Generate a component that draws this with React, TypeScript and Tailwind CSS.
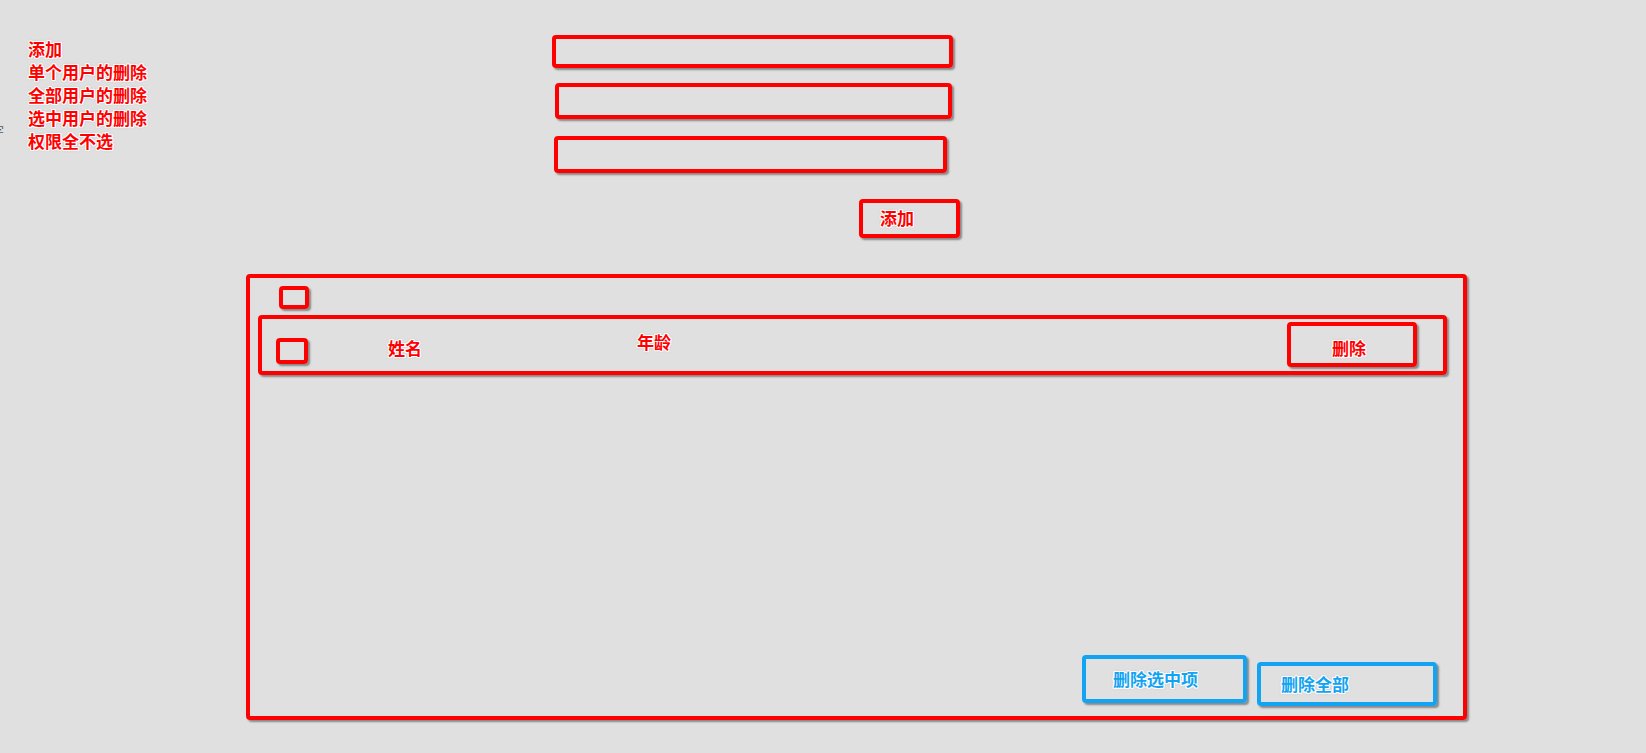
import React, { useState } from 'react';

interface User {
  id: number;
  name: string;
  age: string;
  checked: boolean;
}

const halo =
  '[text-shadow:1px_0_0_#fff,-1px_0_0_#fff,0_1px_0_#fff,0_-1px_0_#fff,1px_1px_1px_#fff,-1px_-1px_1px_#fff,1px_-1px_1px_#fff,-1px_1px_1px_#fff,0_0_3px_#888]';

const menu = ['添加', '单个用户的删除', '全部用户的删除', '选中用户的删除', '权限全不选'];

const App = () => {
  const [users, setUsers] = useState<User[]>([{ id: 1, name: '姓名', age: '年龄', checked: false }]);
  const [allChecked, setAllChecked] = useState(false);

  const removeUser = (id: number) => setUsers(users.filter((u) => u.id !== id));

  return (
    <div className="relative min-h-[753px] overflow-hidden bg-[#e0e0e0] pt-[35px] font-['Noto_Sans_CJK_SC','Noto_Sans',sans-serif] font-bold">
      <span className="absolute left-[-8px] top-[122px] text-[12px] font-normal text-[#555]">字</span>

      <div className="flex">
        <ul className={`ml-[28px] mt-[2px] w-[150px] text-[17px] leading-[23px] text-[#ff0000] ${halo}`}>
          {menu.map((item) => (
            <li key={item}>{item}</li>
          ))}
        </ul>

        <div className="ml-[374px] flex flex-col">
          <input className="h-[33px] w-[401px] rounded-[4px] border-4 border-[#ff0000] bg-transparent shadow-[2px_2px_2px_rgba(0,0,0,0.4)] outline-none" />
          <input className="ml-[3px] mt-[15px] h-[36px] w-[397px] rounded-[4px] border-4 border-[#ff0000] bg-transparent shadow-[2px_2px_2px_rgba(0,0,0,0.4)] outline-none" />
          <input className="ml-[2px] mt-[17px] h-[37px] w-[393px] rounded-[4px] border-4 border-[#ff0000] bg-transparent shadow-[2px_2px_2px_rgba(0,0,0,0.4)] outline-none" />
          <button
            className={`ml-[307px] mt-[26px] flex h-[39px] w-[101px] items-start rounded-[4px] border-4 border-[#ff0000] pl-[17px] pt-[3px] text-[17px] leading-[24px] text-[#ff0000] shadow-[2px_2px_2px_rgba(0,0,0,0.4)] ${halo}`}
            onClick={() => setUsers([...users, { id: Date.now(), name: '姓名', age: '年龄', checked: false }])}
          >
            添加
          </button>
        </div>
      </div>

      <div className="ml-[246px] mt-[36px] flex h-[446px] w-[1221px] flex-col rounded-[4px] border-4 border-[#ff0000] shadow-[2px_2px_2px_rgba(0,0,0,0.4)]">
        <div
          className="ml-[29px] mt-[8px] h-[23px] w-[30px] cursor-pointer rounded-[4px] border-4 border-[#ff0000] shadow-[2px_2px_2px_rgba(0,0,0,0.4)]"
          onClick={() => setAllChecked(!allChecked)}
        />

        {users.map((u) => (
          <div
            key={u.id}
            className="ml-[8px] mt-[6px] flex h-[60px] w-[1189px] items-start rounded-[4px] border-4 border-[#ff0000] shadow-[2px_2px_2px_rgba(0,0,0,0.4)]"
          >
            <div className="ml-[14px] mt-[19px] h-[26px] w-[32px] shrink-0 rounded-[4px] border-4 border-[#ff0000] shadow-[2px_2px_2px_rgba(0,0,0,0.4)]" />
            <span className={`ml-[80px] mt-[17px] text-[17px] leading-[24px] text-[#ff0000] ${halo}`}>{u.name}</span>
            <span className={`ml-[215px] mt-[11px] text-[17px] leading-[24px] text-[#ff0000] ${halo}`}>{u.age}</span>
            <button
              className={`ml-auto mr-[26px] mt-[3px] flex h-[45px] w-[130px] items-start justify-center rounded-[4px] border-4 border-[#ff0000] pr-[6px] pt-[10px] text-[17px] leading-[24px] text-[#ff0000] shadow-[2px_2px_2px_rgba(0,0,0,0.4)] ${halo}`}
              onClick={() => removeUser(u.id)}
            >
              删除
            </button>
          </div>
        ))}

        <div className="mb-[10px] mr-[26px] mt-auto flex items-start justify-end gap-[10px]">
          <button
            className={`flex h-[48px] w-[165px] items-start rounded-[4px] border-4 border-[#12a4f2] pl-[27px] pt-[8px] text-[17px] leading-[24px] text-[#12a4f2] shadow-[2px_2px_2px_rgba(0,0,0,0.4)] ${halo}`}
            onClick={() => setUsers(users.filter((u) => !u.checked))}
          >
            删除选中项
          </button>
          <button
            className={`mt-[7px] flex h-[44px] w-[180px] items-start rounded-[4px] border-4 border-[#12a4f2] pl-[20px] pt-[6px] text-[17px] leading-[24px] text-[#12a4f2] shadow-[2px_2px_2px_rgba(0,0,0,0.4)] ${halo}`}
            onClick={() => setUsers([])}
          >
            删除全部
          </button>
        </div>
      </div>
    </div>
  );
};

export default App;
